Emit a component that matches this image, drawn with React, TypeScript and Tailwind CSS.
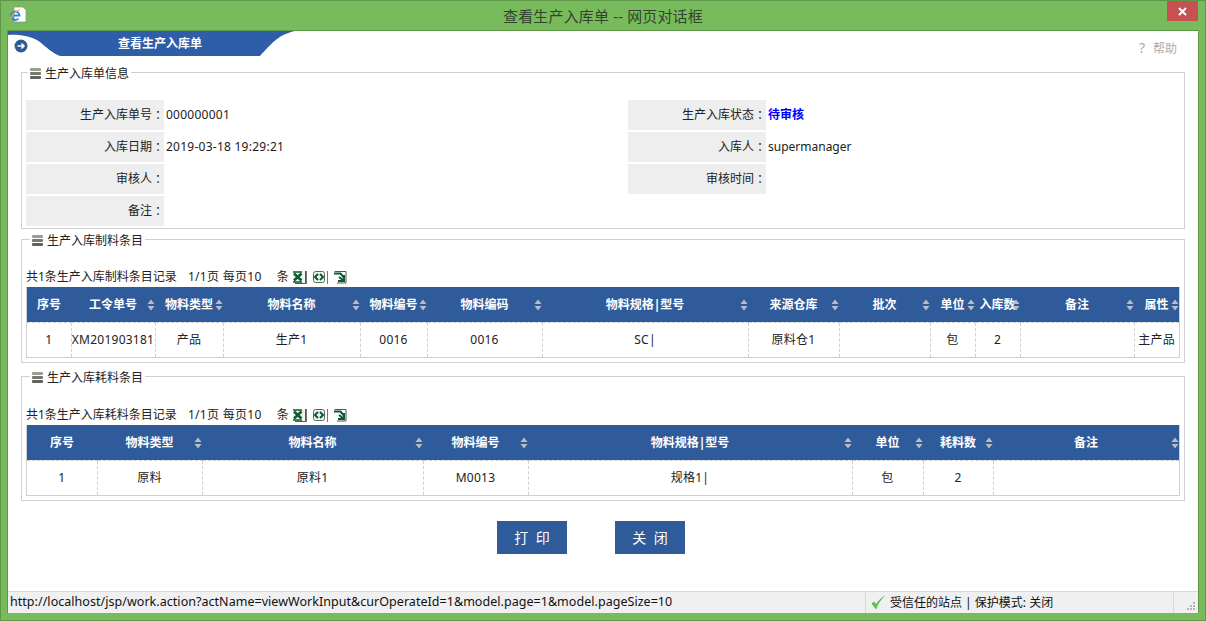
import React from 'react';

const font = "font-['Noto_Sans','Noto_Sans_CJK_SC',sans-serif]";

const SortIcon = () => (
    <svg className="absolute right-[0px] top-1/2 -translate-y-1/2" width="8" height="12" viewBox="0 0 8 12">
        <path d="M4 0.5 L7.5 5 L0.5 5 Z M0.5 7 L7.5 7 L4 11.5 Z" fill="#b9bcc0" />
    </svg>
);

const StackIcon = () => (
    <svg width="11" height="11" viewBox="0 0 11 11">
        <rect x="0" y="0" width="11" height="3" rx="1" fill="#9a9d92" />
        <rect x="0" y="4" width="11" height="3" rx="1" fill="#77796f" />
        <rect x="0" y="8" width="11" height="3" rx="1" fill="#62645c" />
    </svg>
);

const ToolIcons = () => (
    <div className="flex items-center ml-[3px]">
        <svg width="14" height="14" viewBox="0 0 14 14">
            <path d="M1 1 H13 V13 H1" fill="#f1f5ef" />
            <path d="M13.5 1 V13.5 H3" fill="none" stroke="#555" />
            <path d="M1 2 H10 M1 12 H10" stroke="#0a5c30" strokeWidth="1.5" />
            <path d="M2 3.5 L9.5 10.5 M9.5 3.5 L2 10.5" stroke="#0a5c30" strokeWidth="2.6" />
        </svg>
        <div className="w-[1px] h-[13px] bg-[#777]" />
        <svg className="ml-[5px]" width="14" height="14" viewBox="0 0 14 14">
            <rect x="1.5" y="1.5" width="11" height="11" rx="2" fill="#eef3ec" stroke="#5b6a5c" />
            <path d="M6 4 L3 7 L6 10 M8 4 L11 7 L8 10" fill="none" stroke="#0a5c30" strokeWidth="2" />
        </svg>
        <div className="w-[1px] h-[13px] bg-[#777] ml-[1px]" />
        <svg className="ml-[5px]" width="14" height="14" viewBox="0 0 14 14">
            <path d="M1.5 1.5 H13 V13 H4" fill="none" stroke="#555" />
            <path d="M1 3.5 H7.5 L10.5 7 M11 5 V11 H5 M10.5 10.5 L6 7" fill="none" stroke="#0a5c30" strokeWidth="2" />
        </svg>
    </div>
);

const Legend = ({ title, shift }: { title: string; shift: string }) => (
    <legend className={`${shift} px-[2px] h-[16px] flex items-center gap-[4px] text-[12px] leading-[16px] text-[#222]`}>
        <span className="translate-y-[1px]">
            <StackIcon />
        </span>
        <span className="translate-y-[2px]">{title}</span>
    </legend>
);

type Col = { name: string; width: string; sort: boolean; value: string };

const DataTable = ({ summary, cols }: { summary: string; cols: Col[] }) => (
    <div>
        <div className="flex items-center h-[20px] text-[12px] text-[#222] whitespace-pre">
            <span>{summary}</span>
            <span className="ml-[11px] tracking-[0.3px]">1/1页 每页10</span>
            <span className="ml-[15px]">条</span>
            <ToolIcons />
        </div>
        <div className="w-[1154px] border border-[#d0d0d0] border-t-0">
            <table className="table-fixed w-[1152px] border-collapse text-[12px]">
                <colgroup>
                    {cols.map((c) => (
                        <col key={c.name} className={c.width} />
                    ))}
                </colgroup>
                <thead>
                    <tr className="bg-[#305b9a] text-white h-[35px]">
                        {cols.map((c) => (
                            <th key={c.name} className="font-bold p-0 pt-[1px] border-b border-dashed border-[#cfcfcf]">
                                <div className="relative whitespace-nowrap">
                                    {c.name}
                                    {c.sort && <SortIcon />}
                                </div>
                            </th>
                        ))}
                    </tr>
                </thead>
                <tbody>
                    <tr className="h-[35px]">
                        {cols.map((c, i) => (
                            <td
                                key={c.name}
                                className={`p-0 pt-[1px] text-center text-[#222] tracking-[0.25px] whitespace-nowrap overflow-hidden ${i < cols.length - 1 ? 'border-r border-dashed border-[#cfcfcf]' : ''}`}
                            >
                                {c.value}
                            </td>
                        ))}
                    </tr>
                </tbody>
            </table>
        </div>
    </div>
);

const inputCols: Col[] = [
    { name: '序号', width: 'w-[44px]', sort: false, value: '1' },
    { name: '工令单号', width: 'w-[84px]', sort: true, value: 'XM201903181' },
    { name: '物料类型', width: 'w-[68px]', sort: true, value: '产品' },
    { name: '物料名称', width: 'w-[137px]', sort: true, value: '生产1' },
    { name: '物料编号', width: 'w-[67px]', sort: true, value: '0016' },
    { name: '物料编码', width: 'w-[115px]', sort: true, value: '0016' },
    { name: '物料规格|型号', width: 'w-[206px]', sort: true, value: 'SC|' },
    { name: '来源仓库', width: 'w-[91px]', sort: true, value: '原料仓1' },
    { name: '批次', width: 'w-[91px]', sort: true, value: '' },
    { name: '单位', width: 'w-[45px]', sort: true, value: '包' },
    { name: '入库数', width: 'w-[45px]', sort: true, value: '2' },
    { name: '备注', width: 'w-[114px]', sort: true, value: '' },
    { name: '属性', width: 'w-[45px]', sort: true, value: '主产品' },
];

const useCols: Col[] = [
    { name: '序号', width: 'w-[70px]', sort: false, value: '1' },
    { name: '物料类型', width: 'w-[105px]', sort: true, value: '原料' },
    { name: '物料名称', width: 'w-[221px]', sort: true, value: '原料1' },
    { name: '物料编号', width: 'w-[105px]', sort: true, value: 'M0013' },
    { name: '物料规格|型号', width: 'w-[324px]', sort: true, value: '规格1|' },
    { name: '单位', width: 'w-[71px]', sort: true, value: '包' },
    { name: '耗料数', width: 'w-[70px]', sort: true, value: '2' },
    { name: '备注', width: 'w-[186px]', sort: true, value: '' },
];

const infoRows = [
    ['生产入库单号', '000000001', '生产入库状态', '待审核'],
    ['入库日期', '2019-03-18 19:29:21', '入库人', 'supermanager'],
    ['审核人', '', '审核时间', ''],
    ['备注', '', '', ''],
];

const InfoCell = ({ label, value, status }: { label: string; value: string; status?: boolean }) => (
    <div className="flex items-center h-[30px] text-[12px]">
        {label && (
            <div className="w-[138px] h-full bg-[#eeeeee] flex items-center justify-end text-[#222]">
                {label}
                <span className="font-['Noto_Sans_CJK_TC',sans-serif]">：</span>
            </div>
        )}
        <div className={`ml-[2px] ${status ? 'text-[#0000ff] font-bold' : /\d/.test(value) ? 'text-[#222] tracking-[0.25px]' : 'text-[#222]'}`}>{value}</div>
    </div>
);

export default function App() {
    return (
        <div className={`${font} w-[1206px] h-[621px] flex flex-col bg-[#78bb5c] border border-[#5f9647] overflow-hidden`}>
            {/* title bar */}
            <div className="flex h-[29px] shrink-0">
                <div className="w-[38px] pl-[9px] pt-[5px]">
                    <svg width="17" height="17" viewBox="0 0 17 17">
                        <path d="M4 1 H13 L16 4 V16 H4 Z" fill="#fff" stroke="#8a8f8a" strokeWidth="0.7" />
                        <path d="M2 9.5 H9.5 A4.2 4.2 0 1 0 8.5 12.5" fill="none" stroke="#2e86de" strokeWidth="1.9" />
                        <path d="M0.5 14.5 C0 11 5 5 10 3.5" fill="none" stroke="#f2b01e" strokeWidth="1.2" />
                    </svg>
                </div>
                <div className="flex-1 text-center text-[15px] tracking-[0.15px] leading-[30px] text-[#33432c]">查看生产入库单 -- 网页对话框</div>
                <div className="w-[38px]">
                    <div className="w-[31px] h-[20px] bg-[#c75050] flex items-center justify-center">
                        <svg width="9" height="9" viewBox="0 0 9 9">
                            <path d="M1 1 L8 8 M8 1 L1 8" stroke="#fff" strokeWidth="2" />
                        </svg>
                    </div>
                </div>
            </div>

            {/* client area */}
            <div className="mx-[6px] mb-[7px] flex-1 min-h-0 bg-white border border-[#5f9647] border-b-0 flex flex-col">
                <div className="flex justify-between h-[25px] shrink-0">
                    <div className="relative w-[287px] h-[25px] flex items-center justify-center pl-[17px]">
                        <svg className="absolute left-0 top-0" width="287" height="25" viewBox="0 0 287 25">
                            <path d="M0 0 H287 C274 3 268 7 252 25 H52 C44 22 38 16 32 11 C24 5 10 3 0 4 Z" fill="#2f5ea8" />
                            <circle cx="13" cy="15" r="6.5" fill="#2f5a93" />
                            <path d="M9.5 15 H15.5 M13.5 12.5 L16 15 L13.5 17.5" fill="none" stroke="#fff" strokeWidth="1.6" />
                        </svg>
                        <span className="relative text-white font-bold text-[12px]">查看生产入库单</span>
                    </div>
                    <div className="pr-[21px] pt-[8px] text-[12px] text-[#aaaaaa] leading-[18px]">
                        <span className="mr-[8px] text-[14px]">?</span>帮助
                    </div>
                </div>

                <div className="px-[13px] pt-[8px]">
                    <fieldset className="w-[1164px] h-[165px] border border-[#d0d0d0] pl-[4px] pt-0 pb-0 pr-0">
                        <Legend title="生产入库单信息" shift="ml-[2px]" />
                        <div className="grid grid-cols-[602px_1fr] gap-y-[2px] mt-[20px]">
                            {infoRows.map((r) => (
                                <React.Fragment key={r[0]}>
                                    <InfoCell label={r[0]} value={r[1]} />
                                    <InfoCell label={r[2]} value={r[3]} status={r[3] === '待审核'} />
                                </React.Fragment>
                            ))}
                        </div>
                    </fieldset>

                    <fieldset className="w-[1164px] h-[132px] mt-[2px] border border-[#d0d0d0] pl-[4px] pt-0 pb-0 pr-0">
                        <Legend title="生产入库制料条目" shift="ml-[4px]" />
                        <div className="mt-[20px]">
                            <DataTable summary="共1条生产入库制料条目记录" cols={inputCols} />
                        </div>
                    </fieldset>

                    <fieldset className="w-[1164px] h-[133px] mt-[5px] border border-[#d0d0d0] pl-[4px] pt-0 pb-0 pr-0">
                        <Legend title="生产入库耗料条目" shift="ml-[4px]" />
                        <div className="mt-[21px]">
                            <DataTable summary="共1条生产入库耗料条目记录" cols={useCols} />
                        </div>
                    </fieldset>

                    <div className="flex justify-center gap-[48px] mt-[20px] pr-[24px]">
                        <button className="w-[70px] h-[33px] pl-[2px] bg-[#305b9a] text-white text-[14px] tracking-[2px]">打 印</button>
                        <button className="w-[70px] h-[33px] pl-[2px] bg-[#305b9a] text-white text-[14px] tracking-[2px]">关 闭</button>
                    </div>
                </div>

                {/* status bar */}
                <div className="mt-auto h-[22px] shrink-0 bg-[#f0f0f0] border-t border-[#d9d9d9] flex items-center text-[12px] text-[#111]">
                    <div className="w-[857px] pl-[2px] whitespace-nowrap text-[12.5px] tracking-[0.04px]">http://localhost/jsp/work.action?actName=viewWorkInput&amp;curOperateId=1&amp;model.page=1&amp;model.pageSize=10</div>
                    <div className="w-[308px] h-full border-l border-[#d9d9d9] flex items-center pl-[5px] gap-[4px] whitespace-nowrap">
                        <svg width="15" height="15" viewBox="0 0 15 15">
                            <path d="M0.5 8.5 L5 14.5 C7 9 10 4 14.5 0.5 C10 2.5 7 6 5 9 L3 6.5 Z" fill="#5cc04a" />
                        </svg>
                        <span>受信任的站点 | 保护模式: 关闭</span>
                    </div>
                    <div className="flex-1 h-full border-l border-[#d9d9d9] flex items-end justify-end pr-[2px] pb-[2px]">
                        <svg width="9" height="9" viewBox="0 0 9 9">
                            <path d="M6 0h2v2H6z M3 3h2v2H3z M6 3h2v2H6z M0 6h2v2H0z M3 6h2v2H3z M6 6h2v2H6z" fill="#b5b5b5" />
                        </svg>
                    </div>
                </div>
            </div>
        </div>
    );
}
